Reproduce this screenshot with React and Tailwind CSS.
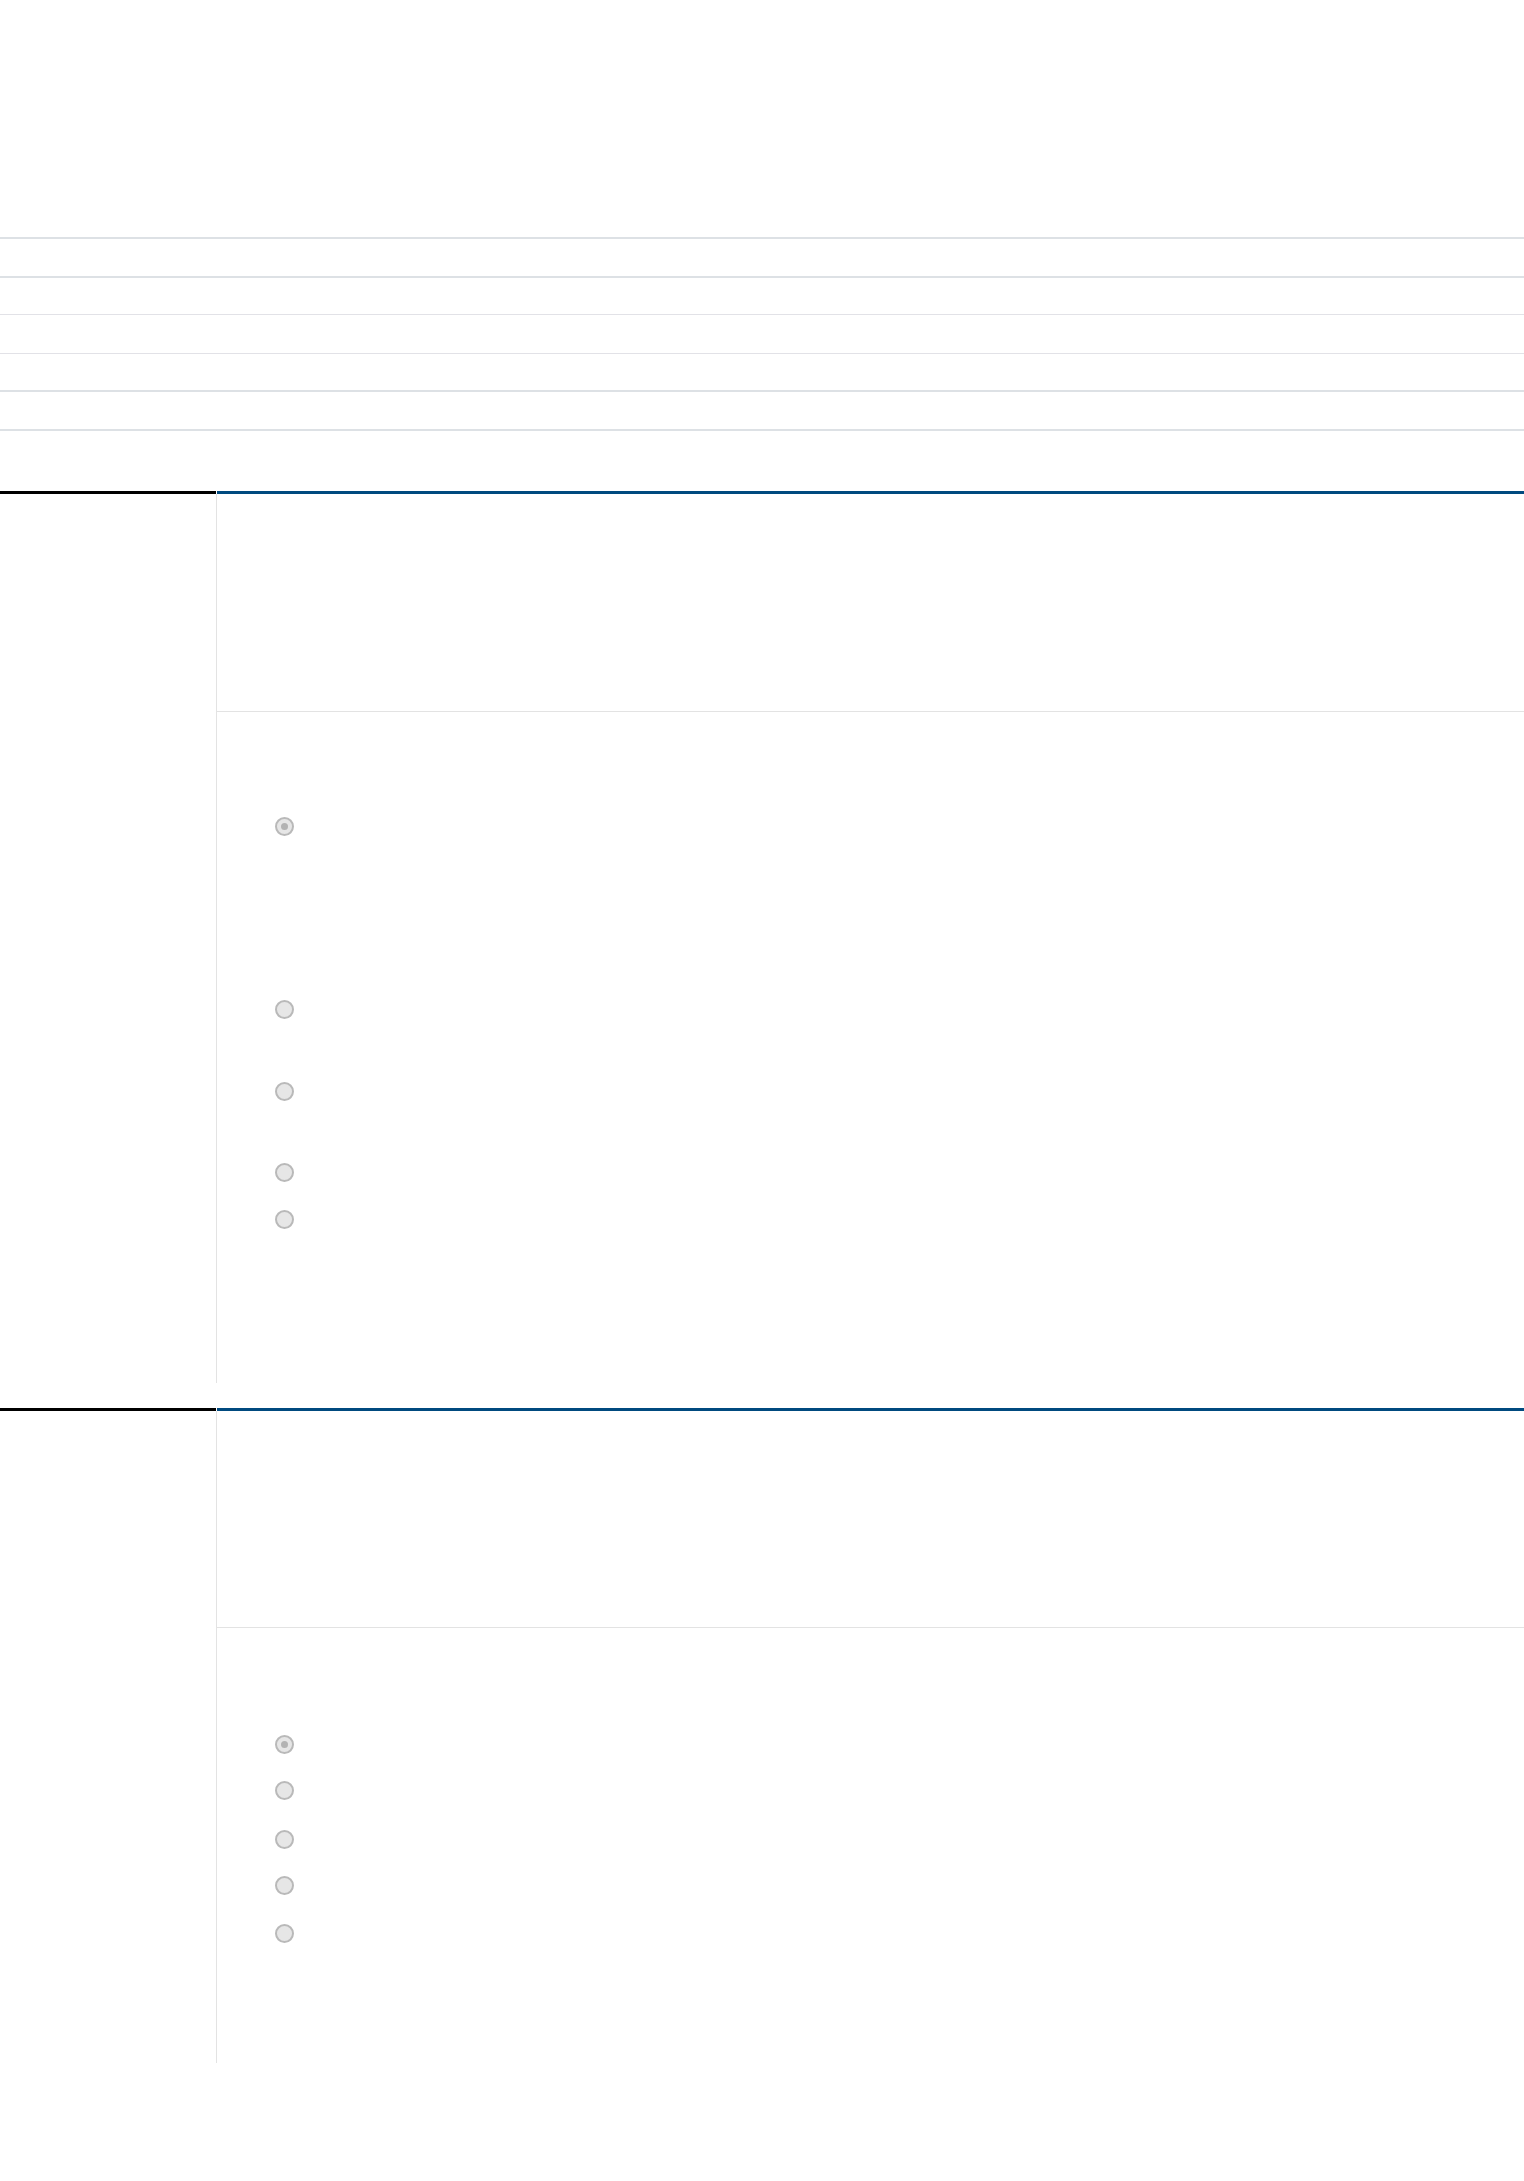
const Radio = ({ checked }) => (
  <span className="flex h-[19px] w-[19px] items-center justify-center rounded-full border-2 border-[#b9b9b9] bg-[#e6e6e6]">
    {checked && <span className="h-[7px] w-[7px] rounded-full bg-[#b3b3b3]" />}
  </span>
);

const Section = ({ gaps, head, first, bottom }) => (
  <section className="flex">
    <div className="w-[216px] shrink-0">
      <div className="h-[3px] bg-black" />
    </div>
    <div className="flex flex-1 flex-col">
      <div className="ml-px h-[3px] bg-[#004a7f]" />
      <div className="border-l border-[#e3e3e3]">
        {/* header area */}
        <div className="border-b border-[#e3e3e3]" style={{ height: head }} />
        {/* options */}
        <div className="flex flex-col pl-[58px]" style={{ paddingTop: first, paddingBottom: bottom }}>
          {gaps.map((g, i) => (
            <div key={i} style={{ marginTop: g }}>
              <Radio checked={i === 0} />
            </div>
          ))}
        </div>
      </div>
    </div>
  </section>
);

const App = () => {
  const rows = [
    { h: 37, b: 'border-b-2 border-[#dde1e5]' },
    { h: 36, b: 'border-b border-[#e2e2e7]' },
    { h: 38, b: 'border-b border-[#e2e2e7]' },
    { h: 36, b: 'border-b-2 border-[#dde1e5]' },
    { h: 37, b: 'border-b-2 border-[#dde1e5]' },
  ];

  return (
    <div className="min-h-[2181px] bg-white font-['Liberation_Sans',sans-serif]">
      <div className="h-[237px]" />
      <div className="border-t-2 border-[#dde1e5]">
        {rows.map((r, i) => (
          <div key={i} className={r.b} style={{ height: r.h + (r.b.includes('-2') ? 2 : 1) }} />
        ))}
      </div>
      <div className="h-[60px]" />
      <Section gaps={[0, 164, 63, 62, 28]} head={218} first={105} bottom={154} />
      <div className="h-[25px]" />
      <Section gaps={[0, 27, 30, 27, 29]} head={217} first={107} bottom={120} />
    </div>
  );
};

export default App;
